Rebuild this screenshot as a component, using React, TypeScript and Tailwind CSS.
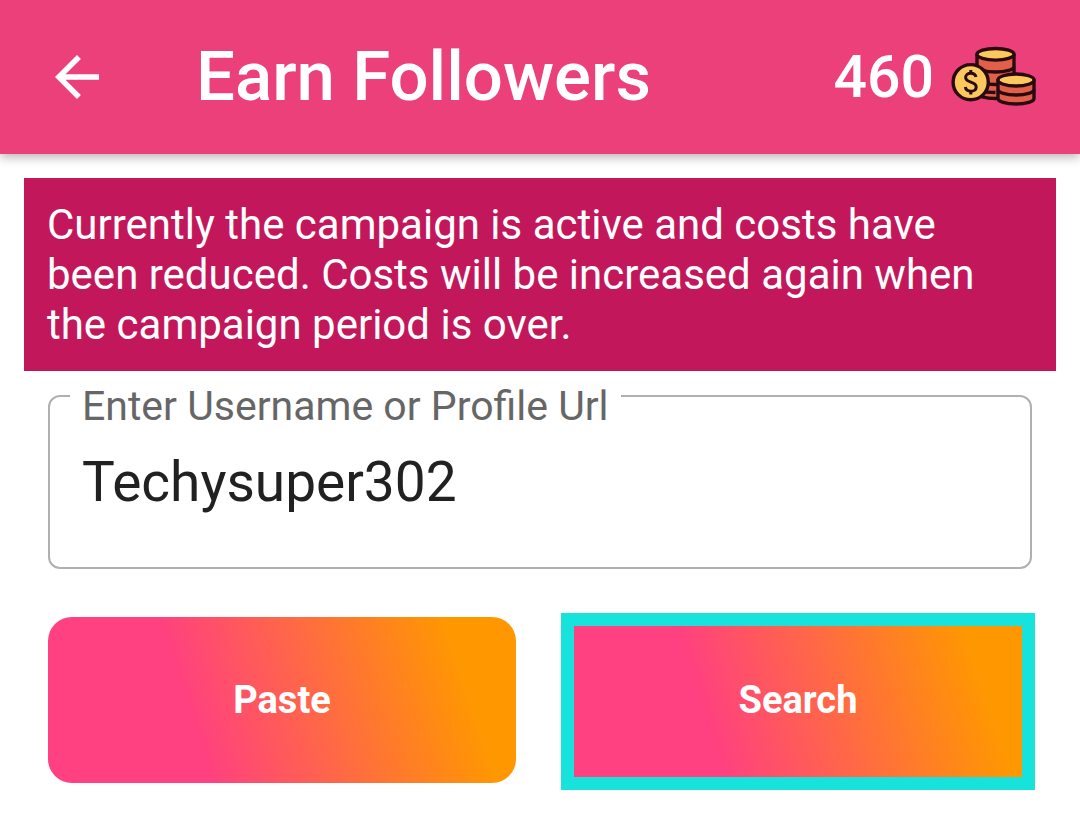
import { useState } from 'react'
import { MdArrowBack } from 'react-icons/md'

function CoinsIcon() {
  return (
    <svg viewBox="0 0 90 64" className="w-[90px] h-16" stroke="#2a0a10" strokeWidth="3.4" strokeLinejoin="round" aria-hidden="true">
      {/* back stack */}
      <path d="M27 9.5V48c0 3 8 5.5 18.500 5.500S64 51 64 48V9.500z" fill="#e0604a" />
      <path d="M27 21.500c0 3 8 5.500 18.500 5.500S64 24.500 64 21.500M27 34c0 3 8 5.500 18.500 5.500S64 37 64 34M27 43c0 3 8 4.500 18.500 4.500" fill="none" />
      <ellipse cx="45.500" cy="9.300" rx="18.500" ry="5.800" fill="#fbc85e" />
      {/* front stack */}
      <path d="M48 35V53.500c0 3 8 5.500 18 5.500S84 56.500 84 53.500V35z" fill="#e0604a" />
      <path d="M48 44.500c0 3 8 5.500 18 5.500s18-2.500 18-5.500" fill="none" />
      <ellipse cx="66" cy="35" rx="18" ry="6" fill="#fbc85e" />
      {/* coin */}
      <circle cx="20.700" cy="37.200" r="17.600" fill="#fbc85e" />
      <path
        d="M26 32c-.6-2.600-2.600-3.800-5.200-3.800-3 0-5.200 1.600-5.200 4.300 0 5.800 10.600 3.400 10.600 9.400 0 2.800-2.300 4.400-5.400 4.400-2.900 0-5-1.400-5.500-4.200M20.800 25v3.200M20.800 46.300v3.200"
        fill="none"
        strokeWidth="3"
      />
    </svg>
  )
}

export default function App() {
  const [username, setUsername] = useState('Techysuper302')

  const handlePaste = async () => {
    const text = await navigator.clipboard.readText()
    setUsername(text)
  }

  return (
    <div className="min-h-screen bg-white font-[Roboto,sans-serif]">
      <header className="flex items-center bg-[#ec407a] pl-11 pr-10 h-[154px] text-white shadow-[0_3px_10px_rgba(0,0,0,0.3)]">
        <button type="button" aria-label="Back">
          <MdArrowBack className="size-[66px]" />
        </button>
        <h1 className="ml-[86px] text-[69px] leading-[80px] font-medium">Earn Followers</h1>
        <div className="ml-auto flex items-center gap-4">
          <span className="text-[59px] leading-[64px] font-medium">460</span>
          <CoinsIcon />
        </div>
      </header>

      <main className="p-6">
        <p className="bg-[#c2185b] px-[23px] pt-[22px] pb-[21px] text-[42px] leading-[50px] text-white">
          Currently the campaign is active and costs have been reduced. Costs will be increased again when the campaign
          period is over.
        </p>

        <form className="px-6 pt-6" onSubmit={(e) => e.preventDefault()}>
          <div className="relative">
            <label htmlFor="username" className="absolute left-[22px] -top-3.5 bg-white px-3 text-[41px] leading-[50px] text-[#666666]">
              Enter Username or Profile Url
            </label>
            <input
              id="username"
              type="text"
              value={username}
              onChange={(e) => setUsername(e.target.value)}
              className="w-full h-[174px] rounded-xl border-2 border-[#b0b0b0] px-8 text-[55px] text-[#212121] focus:outline-none"
            />
          </div>

          <div className="mt-12 grid grid-cols-2 gap-12 text-[38px] font-bold text-white">
            <button
              type="button"
              onClick={handlePaste}
              className="h-[166px] rounded-3xl bg-[linear-gradient(72deg,#ff4081_31%,#ff9800_87%)]"
            >
              Paste
            </button>
            <div className="relative">
              <button
                type="submit"
                className="w-full h-[166px] rounded-3xl bg-[linear-gradient(72deg,#ff4081_31%,#ff9800_87%)]"
              >
                Search
              </button>
              {/* highlight frame over the button */}
              <span className="pointer-events-none absolute -inset-x-[3px] -top-1 -bottom-[7px] border-[13px] border-[#18e2dc]" />
            </div>
          </div>
        </form>
      </main>
    </div>
  )
}
